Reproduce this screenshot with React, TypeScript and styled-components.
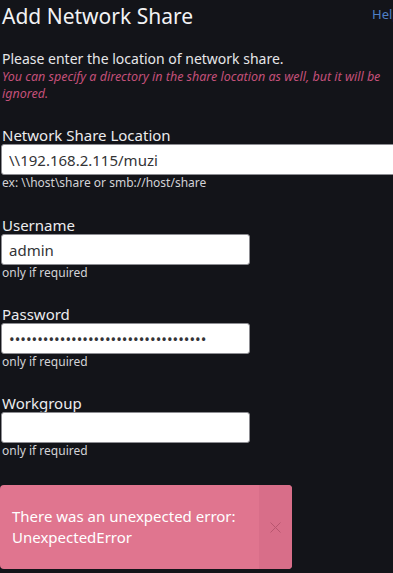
import styled, { createGlobalStyle } from "styled-components";

const GlobalStyle = createGlobalStyle`
  html, body {
    margin: 0;
    padding: 0;
    background: #131419;
    overflow: hidden;
  }
  body {
    font-family: "Noto Sans", "Open Sans", sans-serif;
    color: #e6e6e8;
  }
`;

const Page = styled.div`
  width: 412px;
  min-height: 573px;
  padding: 0 0 0 2px;
  box-sizing: border-box;
`;

const Header = styled.div`
  display: flex;
  justify-content: space-between;
  align-items: flex-start;
`;

const Title = styled.h1`
  margin: 0;
  padding-top: 1px;
  font-size: 21px;
  font-weight: 400;
  line-height: 30px;
  color: #f2f2f4;
`;

const HelpLink = styled.a`
  margin: 5px 0 0 0;
  font-size: 13px;
  color: #4f80c6;
  text-decoration: none;
  width: 40px;
`;

const Intro = styled.p`
  margin: 18px 0 0 0;
  font-size: 14px;
  line-height: 19px;
`;

const Note = styled.p`
  margin: 0;
  font-size: 12.5px;
  line-height: 17px;
  font-style: italic;
  color: #c4507a;
`;

const Field = styled.div<{ $top: number }>`
  display: flex;
  flex-direction: column;
  margin-top: ${(p) => p.$top}px;
`;

const Label = styled.label`
  font-size: 15px;
  line-height: 18px;
  color: #ececee;
`;

const Input = styled.input<{ $wide?: boolean }>`
  box-sizing: border-box;
  width: ${(p) => (p.$wide ? "420px" : "249px")};
  height: 31px;
  margin: 0 0 0 -1px;
  padding: 0 7px;
  border: 1px solid #8d8d92;
  border-radius: 3px;
  background: #ffffff;
  color: #333336;
  font-family: "Noto Sans", "Open Sans", sans-serif;
  font-size: 15px;
  outline: none;
`;

const Hint = styled.span`
  font-size: 12px;
  line-height: 16px;
  color: #d2d2d6;
`;

const Toast = styled.div`
  display: flex;
  width: 292px;
  height: 84px;
  margin: 26px 0 0 -2px;
  border-radius: 4px;
  background: #e0758f;
  overflow: hidden;
`;

const ToastText = styled.div`
  flex: 1;
  display: flex;
  align-items: center;
  padding: 0 12px;
  font-size: 15px;
  line-height: 21px;
  color: #ffffff;
`;

const CloseButton = styled.button`
  width: 33px;
  border: none;
  padding: 0;
  background: #d86e89;
  display: flex;
  align-items: center;
  justify-content: center;
  cursor: pointer;
`;

const CloseIcon = () => (
  <svg width="11" height="11" viewBox="0 0 11 11">
    <path d="M0.5 0.5 L10.5 10.5 M10.5 0.5 L0.5 10.5" stroke="#b8566f" strokeWidth="1" />
  </svg>
);

const App = () => {
  return (
    <Page>
      <GlobalStyle />
      <Header>
        <Title>Add Network Share</Title>
        <HelpLink href="#">Help</HelpLink>
      </Header>

      <Intro>Please enter the location of network share.</Intro>
      <Note>
        You can specify a directory in the share location as well, but it will be
        ignored.
      </Note>

      <Field $top={24}>
        <Label>Network Share Location</Label>
        <Input $wide defaultValue="\\192.168.2.115/muzi" />
        <Hint>ex: \\host\share or smb://host/share</Hint>
      </Field>

      <Field $top={25}>
        <Label>Username</Label>
        <Input defaultValue="admin" />
        <Hint>only if required</Hint>
      </Field>

      <Field $top={24}>
        <Label>Password</Label>
        <Input type="password" defaultValue="muzimuzimuzimuzimuzimuzimuzimuzimuz" />
        <Hint>only if required</Hint>
      </Field>

      <Field $top={24}>
        <Label>Workgroup</Label>
        <Input defaultValue="" />
        <Hint>only if required</Hint>
      </Field>

      <Toast>
        <ToastText>
          There was an unexpected error:
          <br />
          UnexpectedError
        </ToastText>
        <CloseButton>
          <CloseIcon />
        </CloseButton>
      </Toast>
    </Page>
  );
};

export default App;
